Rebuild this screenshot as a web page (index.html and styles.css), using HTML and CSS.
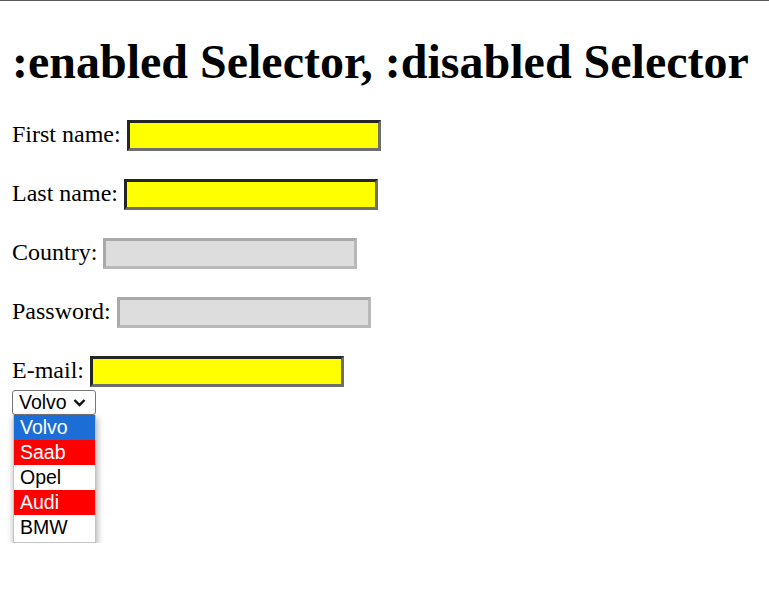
FILE: index.html
```html
<!DOCTYPE html>
<html>
<head>
<meta charset="utf-8">
<link rel="stylesheet" href="styles.css">
</head>
<body>
<div class="page">
  <h1 class="title">:enabled Selector, :disabled Selector</h1>
  <form class="form">
    <div class="row"><label class="label">First name:</label><input class="field" type="text"></div>
    <div class="row"><label class="label">Last name:</label><input class="field" type="text"></div>
    <div class="row"><label class="label">Country:</label><input class="field" type="text" disabled></div>
    <div class="row"><label class="label">Password:</label><input class="field" type="password" disabled></div>
    <div class="row row-last"><label class="label">E-mail:</label><input class="field" type="text"></div>
    <div class="select-wrap">
      <div class="select">
        <span class="select-value">Volvo</span>
        <svg class="chevron" width="13" height="9" viewBox="0 0 13 9"><polyline points="1.5,2 6.5,7 11.5,2" fill="none" stroke="#111" stroke-width="2.4"/></svg>
      </div>
      <div class="listbox">
        <div class="option selected">Volvo</div>
        <div class="option red">Saab</div>
        <div class="option">Opel</div>
        <div class="option red">Audi</div>
        <div class="option">BMW</div>
      </div>
    </div>
  </form>
</div>
</body>
</html>
```
FILE: styles.css
```css
html, body {
  margin: 0;
  padding: 0;
  background: #fff;
}
.page {
  border-top: 1px solid #5a5a5a;
  padding: 0 12px;
  font-family: "Liberation Serif", "Times New Roman", serif;
  color: #000;
}
.title {
  font-size: 48px;
  font-weight: bold;
  line-height: 55px;
  margin: 33px 0 31px;
}
.form {
  display: flex;
  flex-direction: column;
  align-items: flex-start;
}
.row {
  display: flex;
  align-items: baseline;
  gap: 6px;
  height: 59px;
  font-size: 24px;
}
.row-last {
  height: 34px;
}
.label {
  font-size: 24px;
}
.field {
  box-sizing: border-box;
  width: 254px;
  height: 31px;
  margin: 0;
  padding: 1px 3px;
  font-family: "Liberation Sans", Arial, sans-serif;
  font-size: 20px;
  background: #ffff00;
  border-style: solid;
  border-width: 3px;
  border-color: #252525 #6e6e6e #6e6e6e #252525;
  outline: none;
}
.field:disabled {
  background: #dddddd;
  border-color: #a9a9a9 #b8b8b8 #b8b8b8 #a9a9a9;
}
.select-wrap {
  display: flex;
  flex-direction: column;
  align-items: flex-start;
}
.select {
  box-sizing: border-box;
  width: 84px;
  height: 25px;
  display: flex;
  align-items: center;
  gap: 6px;
  padding: 0 4px 0 6px;
  border: 1px solid #767676;
  border-radius: 3px;
  font-family: "Liberation Sans", Arial, sans-serif;
  font-size: 19.5px;
  color: #000;
  background: #fff;
}
.chevron {
  display: block;
}
.listbox {
  width: 83px;
  margin-left: 1px;
  box-sizing: border-box;
  background: #fff;
  border: 1px solid #c4c4c4;
  border-top: none;
  box-shadow: 1px 3px 7px rgba(0, 0, 0, 0.35);
  font-family: "Liberation Sans", Arial, sans-serif;
  font-size: 19.5px;
  padding-bottom: 2px;
}
.option {
  height: 25px;
  line-height: 25px;
  padding-left: 6px;
  color: #000;
}
.option.selected {
  background: #1c6dd6;
  color: #fff;
}
.option.red {
  background: #ff0000;
  color: #fff;
}
```
